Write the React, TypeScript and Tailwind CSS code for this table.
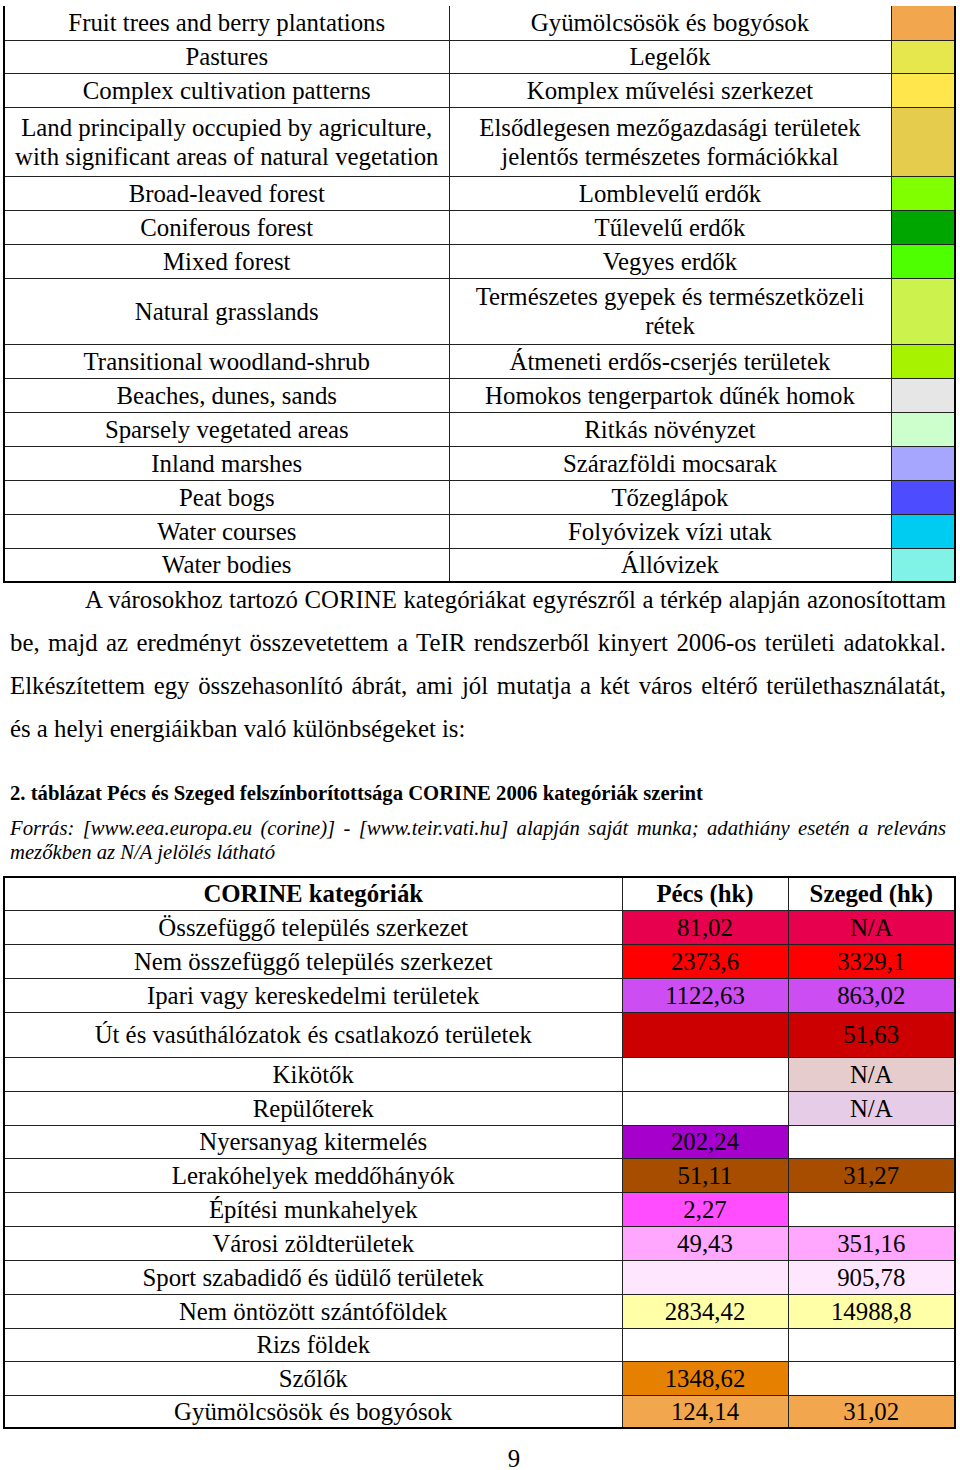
const legend = [
  { en: ["Fruit trees and berry plantations"], hu: ["Gyümölcsösök és bogyósok"], color: "bg-[#f2a64d]", h: "h-[34px]" },
  { en: ["Pastures"], hu: ["Legelők"], color: "bg-[#e6e64d]", h: "h-[33px]" },
  { en: ["Complex cultivation patterns"], hu: ["Komplex művelési szerkezet"], color: "bg-[#ffe64d]", h: "h-[34px]" },
  {
    en: ["Land principally occupied by agriculture,", "with significant areas of natural vegetation"],
    hu: ["Elsődlegesen mezőgazdasági területek", "jelentős természetes formációkkal"],
    color: "bg-[#e6cc4d]",
    h: "h-[69px]",
  },
  { en: ["Broad-leaved forest"], hu: ["Lomblevelű erdők"], color: "bg-[#80ff00]", h: "h-[34px]" },
  { en: ["Coniferous forest"], hu: ["Tűlevelű erdők"], color: "bg-[#00a600]", h: "h-[34px]" },
  { en: ["Mixed forest"], hu: ["Vegyes erdők"], color: "bg-[#4dff00]", h: "h-[34px]" },
  { en: ["Natural grasslands"], hu: ["Természetes gyepek és természetközeli", "rétek"], color: "bg-[#ccf24d]", h: "h-[66px]" },
  { en: ["Transitional woodland-shrub"], hu: ["Átmeneti erdős-cserjés területek"], color: "bg-[#a6f200]", h: "h-[34px]" },
  { en: ["Beaches, dunes, sands"], hu: ["Homokos tengerpartok dűnék homok"], color: "bg-[#e6e6e6]", h: "h-[34px]" },
  { en: ["Sparsely vegetated areas"], hu: ["Ritkás növényzet"], color: "bg-[#ccffcc]", h: "h-[34px]" },
  { en: ["Inland marshes"], hu: ["Szárazföldi mocsarak"], color: "bg-[#a6a6ff]", h: "h-[34px]" },
  { en: ["Peat bogs"], hu: ["Tőzeglápok"], color: "bg-[#4d4dff]", h: "h-[34px]" },
  { en: ["Water courses"], hu: ["Folyóvizek vízi utak"], color: "bg-[#00ccf2]", h: "h-[34px]" },
  { en: ["Water bodies"], hu: ["Állóvizek"], color: "bg-[#80f2e6]", h: "h-[34px]" },
];

const landUse = [
  { name: "Összefüggő település szerkezet", pecs: "81,02", szeged: "N/A", pc: "bg-[#e6004d]", sc: "bg-[#e6004d]", h: "h-[34px]" },
  { name: "Nem összefüggő település szerkezet", pecs: "2373,6", szeged: "3329,1", pc: "bg-[#ff0000]", sc: "bg-[#ff0000]", h: "h-[34px]" },
  { name: "Ipari vagy kereskedelmi területek", pecs: "1122,63", szeged: "863,02", pc: "bg-[#cc4df2]", sc: "bg-[#cc4df2]", h: "h-[34px]" },
  { name: "Út és vasúthálózatok és csatlakozó területek", pecs: "", szeged: "51,63", pc: "bg-[#cc0000]", sc: "bg-[#cc0000]", h: "h-[45px]" },
  { name: "Kikötők", pecs: "", szeged: "N/A", pc: "bg-white", sc: "bg-[#e6cccc]", h: "h-[34px]" },
  { name: "Repülőterek", pecs: "", szeged: "N/A", pc: "bg-white", sc: "bg-[#e6cce6]", h: "h-[34px]" },
  { name: "Nyersanyag kitermelés", pecs: "202,24", szeged: "", pc: "bg-[#a600cc]", sc: "bg-white", h: "h-[33px]" },
  { name: "Lerakóhelyek meddőhányók", pecs: "51,11", szeged: "31,27", pc: "bg-[#a64d00]", sc: "bg-[#a64d00]", h: "h-[34px]" },
  { name: "Építési munkahelyek", pecs: "2,27", szeged: "", pc: "bg-[#ff4dff]", sc: "bg-white", h: "h-[34px]" },
  { name: "Városi zöldterületek", pecs: "49,43", szeged: "351,16", pc: "bg-[#ffa6ff]", sc: "bg-[#ffa6ff]", h: "h-[34px]" },
  { name: "Sport szabadidő és üdülő területek", pecs: "", szeged: "905,78", pc: "bg-[#ffe6ff]", sc: "bg-[#ffe6ff]", h: "h-[34px]" },
  { name: "Nem öntözött szántóföldek", pecs: "2834,42", szeged: "14988,8", pc: "bg-[#ffffa8]", sc: "bg-[#ffffa8]", h: "h-[34px]" },
  { name: "Rizs földek", pecs: "", szeged: "", pc: "bg-white", sc: "bg-white", h: "h-[33px]" },
  { name: "Szőlők", pecs: "1348,62", szeged: "", pc: "bg-[#e68000]", sc: "bg-white", h: "h-[34px]" },
  { name: "Gyümölcsösök és bogyósok", pecs: "124,14", szeged: "31,02", pc: "bg-[#f2a64d]", sc: "bg-[#f2a64d]", h: "h-[33px]" },
];

const justified = "text-justify [text-align-last:justify]";

export default function App() {
  return (
    <div className="h-[1470px] w-[960px] bg-white pt-[6px] font-['Liberation_Serif',serif] text-black">
      <div className="px-[3px]">
        <table className="w-[951px] table-fixed border-collapse text-center text-[24.8px] leading-[29px]">
          <colgroup>
            <col className="w-[445px]" />
            <col className="w-[442px]" />
            <col className="w-[64px]" />
          </colgroup>
          <tbody>
            {legend.map((row, i) => {
              const last = i === legend.length - 1;
              const edge = i === 0 ? "border-t-0" : "border-t border-t-[#222]";
              const bottom = last ? "border-b-2 border-b-black" : "";
              return (
                <tr key={row.hu[0]} className={row.h}>
                  <td className={`border-l-2 border-l-black border-r border-r-[#222] p-0 ${edge} ${bottom}`}>
                    {row.en.map((l) => (
                      <div key={l}>{l}</div>
                    ))}
                  </td>
                  <td className={`border-r border-r-[#222] p-0 ${edge} ${bottom}`}>
                    {row.hu.map((l) => (
                      <div key={l}>{l}</div>
                    ))}
                  </td>
                  <td className={`border-r-2 border-r-black p-0 ${row.color} ${edge} ${bottom}`} />
                </tr>
              );
            })}
          </tbody>
        </table>
      </div>

      <div className="-mt-[5px] pl-[10px] pr-[14px] text-[24.8px] leading-[43px]">
        <div className={`pl-[75px] ${justified}`}>
          A városokhoz tartozó CORINE kategóriákat egyrészről a térkép alapján azonosítottam
        </div>
        <div className={justified}>
          be, majd az eredményt összevetettem a TeIR rendszerből kinyert 2006-os területi adatokkal.
        </div>
        <div className={justified}>
          Elkészítettem egy összehasonlító ábrát, ami jól mutatja a két város eltérő területhasználatát,
        </div>
        <div>és a helyi energiáikban való különbségeket is:</div>
      </div>

      <div className="mt-[31px] pl-[10px] pr-[14px] text-[20.7px] font-bold leading-[24px]">
        2. táblázat Pécs és Szeged felszínborítottsága CORINE 2006 kategóriák szerint
      </div>
      <div className="mt-[11px] pl-[10px] pr-[14px] text-[20.7px] italic leading-[24px]">
        <div className={justified}>
          Forrás: [www.eea.europa.eu (corine)] - [www.teir.vati.hu] alapján saját munka; adathiány esetén a releváns
        </div>
        <div>mezőkben az N/A jelölés látható</div>
      </div>

      <div className="mt-[12px] px-[3px]">
        <table className="w-[951px] table-fixed border-collapse border-2 border-black text-center text-[24.8px] leading-[29px]">
          <colgroup>
            <col className="w-[618px]" />
            <col className="w-[166px]" />
            <col className="w-[167px]" />
          </colgroup>
          <thead>
            <tr className="h-[33px] font-bold">
              <th className="border border-[#222] p-0">CORINE kategóriák</th>
              <th className="border border-[#222] p-0">Pécs (hk)</th>
              <th className="border border-[#222] p-0">Szeged (hk)</th>
            </tr>
          </thead>
          <tbody>
            {landUse.map((row) => (
              <tr key={row.name} className={row.h}>
                <td className="border border-[#222] p-0">{row.name}</td>
                <td className={`border border-[#222] p-0 ${row.pc}`}>{row.pecs}</td>
                <td className={`border border-[#222] p-0 ${row.sc}`}>{row.szeged}</td>
              </tr>
            ))}
          </tbody>
        </table>
      </div>

      <div className="mt-[20px] pl-[68px] text-center text-[24.8px] leading-[20px]">9</div>
    </div>
  );
}
